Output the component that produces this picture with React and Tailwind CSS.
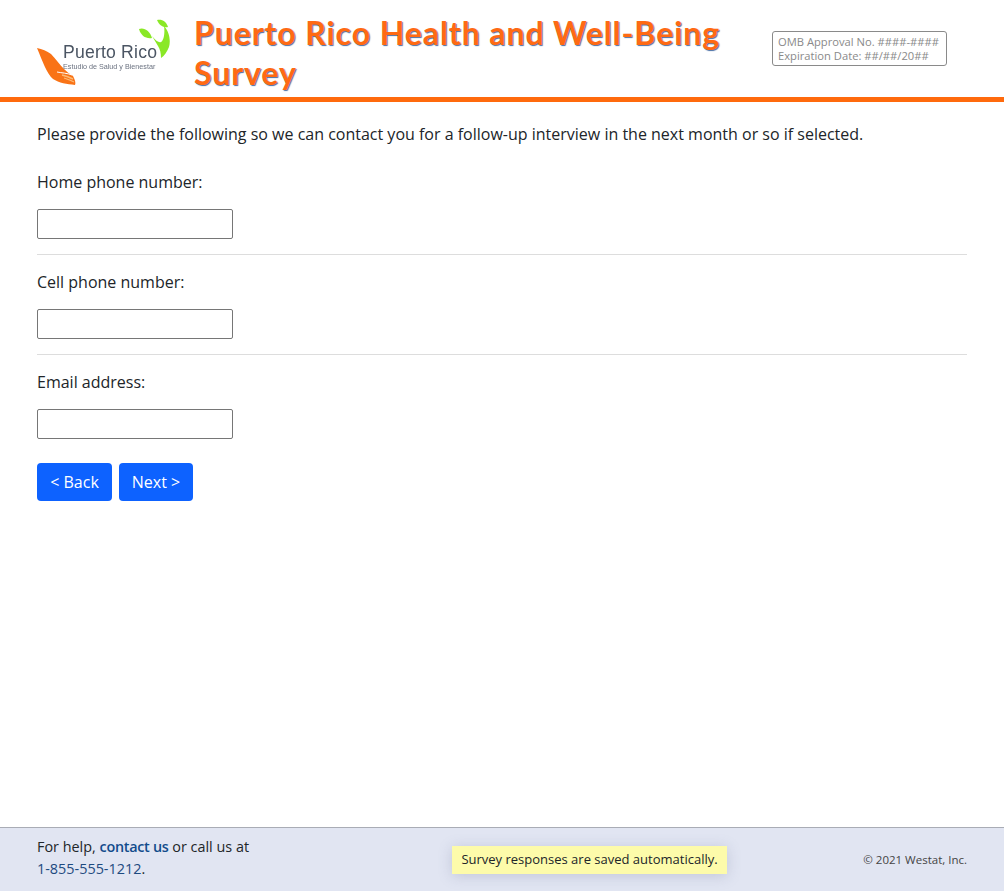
function Logo() {
  return (
    <svg width="136" height="72" viewBox="0 0 136 72" className="shrink-0 block blur-[0.35px]">
      <path d="M0 30 C5 31 10 33 14 36 C19 41 23 47 27 51 C30 54 33 56 36 58 C38 62 39 65 38 67 C30 66 22 65 16 61 C10 56 5 42 0 30 Z" fill="#f97316" />
      <path d="M20 54 C25 55 30 55 35 57" stroke="#ffffff" strokeWidth="1" fill="none" />
      <path d="M25 57 C29 58 32 59 36 61" stroke="#fdba74" strokeWidth="1.5" fill="none" />
      <path d="M27 60 C30 61 33 62 37 64" stroke="#fdba74" strokeWidth="1.2" fill="none" />
      <path d="M102 11 C107 9 113 13 115 20 C109 21 104 18 102 11 Z" fill="#8ae826" />
      <path d="M120 2 C125 1 129 3 131 9 C126 10 122 7 120 2 Z" fill="#8ae826" />
      <path d="M115 18 C119 23 122 25 124 24 C127 22 128 15 127 8 C132 13 134 22 132 29 C130 34 127 38 124 40 C124 35 123 31 121 28 C119 25 117 21 115 18 Z" fill="#8ae826" />
      <text x="26" y="40" fontSize="17.6" letterSpacing="0.2" fill="#4b5563" fontFamily="'Liberation Sans', sans-serif">Puerto Rico</text>
      <text x="26" y="50.5" fontSize="7.2" fill="#6b7280" fontFamily="'Liberation Sans', sans-serif">Estudio de Salud y Bienestar</text>
    </svg>
  );
}

function Question({ label, last }) {
  return (
    <div className={last ? "pt-[15px]" : "pt-[15px] pb-[15px] border-b border-[#dddddd]"}>
      <label className="block text-base leading-6">{label}</label>
      <input type="text" className="block mt-[15px] w-[196px] h-[30px] bg-white border border-[#767676] rounded-[2px]" />
    </div>
  );
}

export default function App() {
  return (
    <div className="min-h-[891px] flex flex-col bg-white text-[#212529] font-['Open_Sans',sans-serif]">
      <header className="h-[102px] shrink-0 flex items-start pl-[37px] border-b-[5px] border-[#ff6a0d]">
        <div className="mt-[18px] w-[157px] shrink-0"><Logo /></div>
        <h1 className="mt-[13px] w-[543px] shrink-0 text-[32px] leading-[40px] font-bold text-[#ff6a13] font-['Lato',sans-serif] tracking-[0.93px] [text-shadow:1px_1px_1px_#4a6fa5]">
          Puerto Rico Health and Well-Being Survey
        </h1>
        <div className="mt-[31px] ml-[35px] w-[175px] h-[35px] shrink-0 border border-[#8a8a8a] rounded-[3px] px-[5px] text-[11.2px] leading-[14px] pt-[3px] text-[#8a8a8a] whitespace-nowrap">
          <div>OMB Approval No. ####-####</div>
          <div>Expiration Date: ##/##/20##</div>
        </div>
      </header>

      <main className="flex-1 px-[37px] pt-5">
        <p className="text-base leading-6 mb-[9px]">
          Please provide the following so we can contact you for a follow-up interview in the next month or so if selected.
        </p>
        <Question label="Home phone number:" />
        <Question label="Cell phone number:" />
        <Question label="Email address:" last />
        <div className="flex gap-[7px] mt-6">
          <button className="w-[75px] h-[38px] rounded-[4px] bg-[#0d62ff] text-white text-base">&lt; Back</button>
          <button className="w-[74px] h-[38px] rounded-[4px] bg-[#0d62ff] text-white text-base">Next &gt;</button>
        </div>
      </main>

      <footer className="h-[64px] shrink-0 bg-[#e1e5f2] border-t border-[#a9acb5] px-[37px] flex items-start">
        <div className="w-[415px] mt-[8px] text-[14.4px] leading-[22px]">
          For help, <a className="font-semibold text-[#124c8c] tracking-[-0.28px]">contact us</a> or call us at
          <br />
          <span className="text-[#1d4a80]">1-855-555-1212</span>.
        </div>
        <div className="mt-[18px] w-[275px] h-[28px] bg-[#fdfbaa] text-[13px] leading-[26px] text-center whitespace-nowrap shadow-[0_2px_14px_rgba(120,125,160,0.3)]">
          Survey responses are saved automatically.
        </div>
        <div className="mt-[23px] w-[240px] text-right text-[11.5px] leading-[17px] text-[#444444]">© 2021 Westat, Inc.</div>
      </footer>
    </div>
  );
}
